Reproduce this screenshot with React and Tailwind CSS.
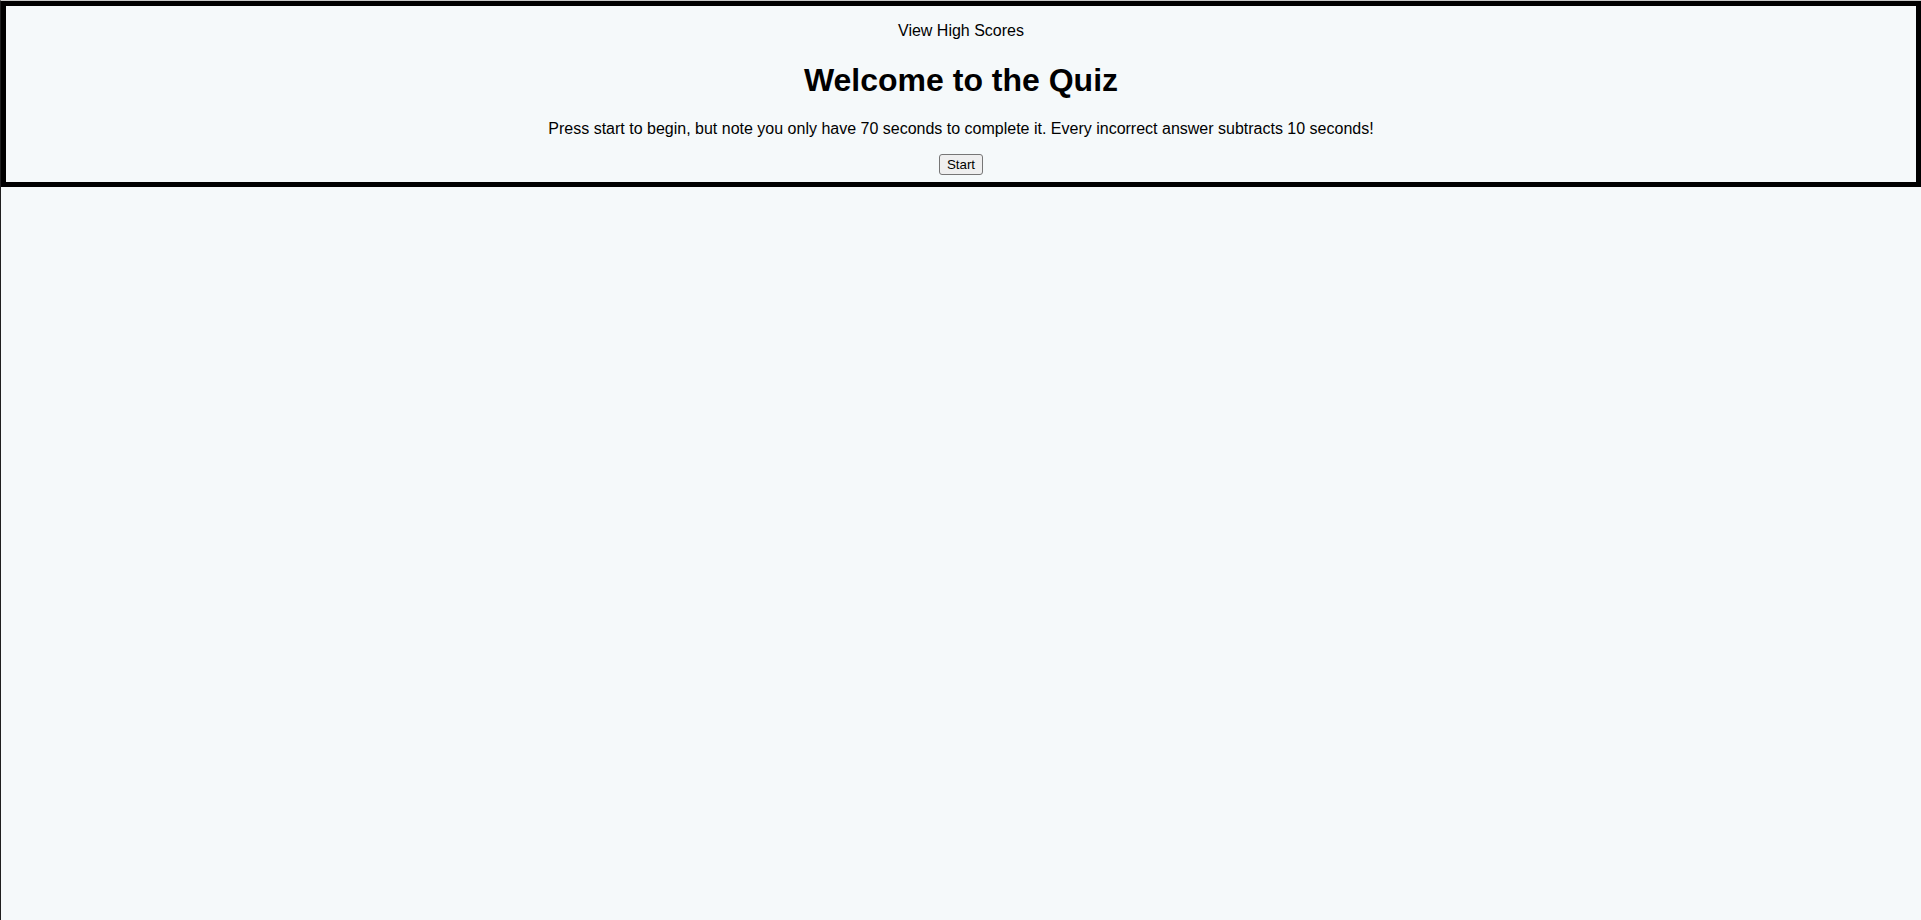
import React from "react"

const App = () => {
  return (
    <div className="min-h-screen bg-[#f5f9fa] border-t border-l border-t-[#c9c9c9] border-l-[#1f1f1f] text-black font-['Liberation_Sans',Arial,sans-serif] leading-[normal]">
      {/* Header box */}
      <header className="border-[5px] border-black text-center pt-4 pb-[7px]">
        <p className="text-base leading-[18.4px]">View High Scores</p>

        <h1 className="my-[21.44px] text-[32px] leading-[36.8px] font-bold">
          Welcome to the Quiz
        </h1>

        <p className="text-base leading-[18.4px]">
          Press start to begin, but note you only have 70 seconds to complete it. Every incorrect answer subtracts 10 seconds!
        </p>

        <div className="mt-4 flex justify-center">
          <button className="h-[21px] px-[7px] text-[13.333px] leading-[15px] bg-[#efefef] border border-[#767676] rounded-[3px] text-black">
            Start
          </button>
        </div>
      </header>
    </div>
  )
}

export default App
